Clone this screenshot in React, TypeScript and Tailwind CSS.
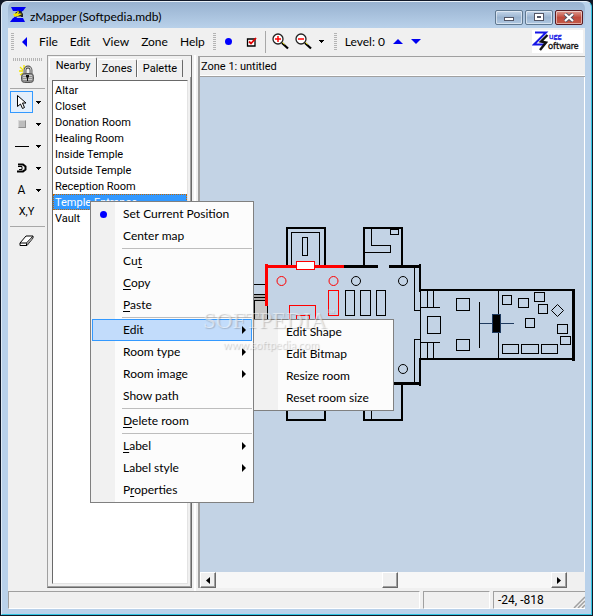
import { ReactNode, useState } from 'react';

interface MenuEntry {
  label: string;
  // index of the underlined access key
  hot?: number;
  submenu?: boolean;
  active?: boolean;
  dot?: boolean;
  divider?: boolean;
}

const rooms = [
  'Altar',
  'Closet',
  'Donation Room',
  'Healing Room',
  'Inside Temple',
  'Outside Temple',
  'Reception Room',
  'Temple Entrance',
  'Vault',
];

const contextMenu: MenuEntry[] = [
  { label: 'Set Current Position', dot: true },
  { label: 'Center map' },
  { label: 'Cut', hot: 2, divider: true },
  { label: 'Copy', hot: 0 },
  { label: 'Paste', hot: 0 },
  { label: 'Edit', submenu: true, active: true, divider: true },
  { label: 'Room type', submenu: true },
  { label: 'Room image', submenu: true },
  { label: 'Show path' },
  { label: 'Delete room', hot: 0, divider: true },
  { label: 'Label', hot: 0, submenu: true, divider: true },
  { label: 'Label style', submenu: true },
  { label: 'Properties', hot: 1 },
];

const editMenu: MenuEntry[] = [
  { label: 'Edit Shape' },
  { label: 'Edit Bitmap' },
  { label: 'Resize room' },
  { label: 'Reset room size' },
];

function Caret() {
  return (
    <svg width="6" height="3" viewBox="0 0 6 3" shapeRendering="crispEdges">
      <path d="M0 0h6L3 3z" />
    </svg>
  );
}

function Grip() {
  return <div className="h-[18px] w-[3px] bg-[repeating-linear-gradient(to_bottom,#b4b4b4_0px,#b4b4b4_1px,#f0f0f0_1px,#f0f0f0_2px)]" />;
}

function AppIcon() {
  return (
    <svg width="16" height="16" viewBox="0 0 16 16">
      <path d="M1 0h15l-3 4H3zM0 15l3-4h10l2 4z" fill="#0000f0" />
      <path d="M12 3L4 12" stroke="#0000f0" strokeWidth="2" />
      <path d="M5 6l3-2h3l2 3v3H6z" fill="#222" />
      <path d="M3 7l4-1 1-3 1 3 3 1-4 2-3 1z" fill="#f4e800" />
      <path d="M8 6h2v1H8zM6 9h5v1H6z" fill="#777" />
    </svg>
  );
}

function Magnifier({ plus }: { plus?: boolean }) {
  return (
    <svg width="17" height="17" viewBox="0 0 17 17">
      <circle cx="6" cy="6" r="5" fill="#fff" stroke="#222" strokeWidth="1.3" />
      <path d="M3 6h6" stroke="#f00" strokeWidth="1.5" />
      {plus && <path d="M6 3v6" stroke="#f00" strokeWidth="1.5" />}
      <path d="M10 10l6 5.5" stroke="#000" strokeWidth="2.2" />
      <path d="M10.5 9.5l2 2" stroke="#e8e000" strokeWidth="1" />
    </svg>
  );
}

function ZuggLogo() {
  return (
    <svg width="51" height="23" viewBox="0 0 51 23" role="img" aria-label="Zugg Software">
      <rect width="51" height="23" fill="#fff" />
      <path d="M3 2.5h11L2 14.500h10" fill="none" stroke="#1616e6" strokeWidth="2" />
      <path d="M15.500 5L9 11.500l5 1L8 20" fill="none" stroke="#111" strokeWidth="2.400" />
      <text x="17" y="9" fontSize="8" fontFamily="Lato, sans-serif" fill="#1616e6" stroke="#1616e6" strokeWidth="0.3">ugg</text>
      <text x="16" y="19" fontSize="9" fontFamily="Lato, sans-serif" fill="#111" stroke="#111" strokeWidth="0.3">oftware</text>
    </svg>
  );
}

function LockIcon() {
  return (
    <svg width="18" height="19" viewBox="0 0 18 19">
      <path d="M1 2l3 3M5 0v4M0 6h4M1 10l3-2" stroke="#f2e600" strokeWidth="1.3" />
      <path d="M6 9V5a3 3 0 0 1 6 0v4" fill="none" stroke="#444" strokeWidth="2.800" />
      <path d="M6 9V5a3 3 0 0 1 6 0v4" fill="none" stroke="#ccc" strokeWidth="1.200" />
      <rect x="2.500" y="8.500" width="12" height="9" rx="3" fill="#8f8f8f" stroke="#555" />
      <path d="M4 10.500h9M4 12.500h9M4 14.500h9" stroke="#ccc" />
      <path d="M7 10h3v2l-1 1v3H8v-3l-1-1z" fill="#111" />
    </svg>
  );
}

function PointerIcon() {
  return (
    <svg width="11" height="16" viewBox="0 0 11 16">
      <path d="M1.500 1.500v11l3-2.500 2 4.500 2-1-2-4.500h3.500z" fill="#fff" stroke="#000" />
    </svg>
  );
}

function MapCanvas() {
  return (
    <svg width="385" height="494" viewBox="200 77 385 494" fill="none" stroke="#000" className="block max-w-none" role="img" aria-label="Zone map">
      <g shapeRendering="crispEdges">
        {/* west stairs */}
        <rect x="250" y="294" width="17" height="7" fill="#a8a8a8" stroke="none" />
        <rect x="250" y="301" width="17" height="19" fill="#c8c8c8" stroke="none" />
        <path d="M250 284.500h16M250 294.500h17M250 297.500h17M255 300.500h12M254.500 300v20M267.500 306v14" />

        {/* north and south side rooms */}
        <path d="M287 266V228h38v38M364 266V228h38v38M287 383v37h38v-37M364 383v37h38v-37" strokeWidth="2" />
        <path d="M291.500 266V232.500h28V266M302.500 237.500h5v18h-5zM371.500 229v16.500h19v7H365M390.500 229.500h8v5h-8zM371.500 383v36" />

        {/* main hall */}
        <path d="M344 266.500h34M389 266.500h32M394 383.500h27" strokeWidth="3" />
        <path d="M420 264v28M420 358v28" strokeWidth="2" />
        <path d="M414.500 268v42.500h6M414.500 382v-42.500h6M420.500 290v70" />
        <path d="M345.500 290.500h9v25h-9zM360.500 290.500h10v25h-10zM376.500 290.500h9v25h-9z" />

        {/* current room */}
        <path d="M265 266.500h79M266.500 264v42" stroke="#f00" strokeWidth="3" />
        <path d="M328.500 290.500h10v25h-10zM289.500 325v-19.500h26V325M296.500 325v-9.500h13v9.500" stroke="#f00" />
        <rect x="296.500" y="261.500" width="18" height="8" fill="#fff" stroke="#f00" />

        {/* east room */}
        <path d="M420 290h154M420 359h154" strokeWidth="2" />
        <path d="M573.500 289v72" strokeWidth="3" />
        <path d="M427.500 291v16M433.500 291v16M421 307.500h19M421 342.500h19M427.500 343v16M433.500 343v16M479.500 302v46M498.500 291v68" />
        <path d="M427.500 316.500h13v17h-13zM456.500 298.500h13v12h-13zM456.500 339.500h13v11h-13z" />
        <path d="M502.500 295.500h9v9h-9zM518.500 298.500h10v9h-10zM534.500 292.500h10v9h-10zM538.500 304.500h9v9h-9zM525.500 318.500h9v9h-9zM557.500 324.500h10v9h-10zM560.500 336.500h10v8h-10z" />
        <path d="M502.500 344.500h16v9h-16zM521.500 344.500h17v9h-17zM541.500 344.500h16v9h-16z" />
        <path d="M480 323.500h34" stroke="#1f3a5f" />
        <rect x="492.500" y="314.500" width="8" height="18" fill="#000" stroke="#1f3a5f" />
      </g>
      <path d="M557.500 304.500l6 6-6 6-6-6z" />
      <circle cx="281.500" cy="281" r="4.500" stroke="#f00" />
      <circle cx="333.500" cy="281" r="4.500" stroke="#f00" />
      <circle cx="356" cy="281" r="4.500" />
      <circle cx="403" cy="281" r="4.500" />
      <circle cx="403" cy="369" r="4.500" />
    </svg>
  );
}

function MenuLabel({ label, hot }: { label: string; hot?: number }) {
  if (hot === undefined) return <span>{label}</span>;
  return (
    <span>
      {label.slice(0, hot)}
      <u className="underline-offset-2">{label[hot]}</u>
      {label.slice(hot + 1)}
    </span>
  );
}

function PopupMenu({ items, className }: { items: MenuEntry[]; className: string }) {
  return (
    <ul
      role="menu"
      className={`absolute z-10 border border-[#808080] bg-[linear-gradient(to_right,#f1f1f1_24px,#fcfcfc_24px)] p-px font-['Lato',sans-serif] text-[12px] text-black ${className}`}
    >
      {items.map((item) => (
        <li key={item.label} role="none">
          {item.divider && <div className="my-px ml-[30px] h-px bg-[#bdbdbd]" />}
          <button
            role="menuitem"
            className={`flex h-[22px] w-full items-center border pr-1 text-left leading-5 ${
              item.active ? 'border-[#3399ff] bg-[#c2dcfb]' : 'border-transparent'
            }`}
          >
            <span className="flex w-[30px] pl-[7px]">
              {item.dot && <span className="h-[7px] w-[7px] rounded-full bg-[#0000ff]" />}
            </span>
            <span className="flex-1 whitespace-nowrap">
              <MenuLabel label={item.label} hot={item.hot} />
            </span>
            {item.submenu && (
              <svg width="5" height="8" viewBox="0 0 5 8">
                <path d="M0 0l4 4-4 4z" />
              </svg>
            )}
          </button>
        </li>
      ))}
    </ul>
  );
}

function ToolRow({ label, children, active, menu = true }: { label: string; children: ReactNode; active?: boolean; menu?: boolean }) {
  return (
    <div className="flex h-[22px] items-center">
      <button
        aria-label={label}
        className={`flex h-[22px] items-center justify-center border ${menu ? 'w-[23px]' : 'w-[33px]'} ${
          active ? 'border-[#3399ff] bg-[#e4effb]' : 'border-transparent'
        }`}
      >
        {children}
      </button>
      {menu && (
        <button aria-label={`${label} options`} className="flex w-2.5 justify-center">
          <Caret />
        </button>
      )}
    </div>
  );
}

function TitleButton({ label, children, close }: { label: string; children: ReactNode; close?: boolean }) {
  return (
    <button
      aria-label={label}
      className={`flex h-[15px] w-7 items-center justify-center rounded-[2px] border shadow-[inset_0_0_0_1px_rgba(255,255,255,0.5)] ${
        close
          ? 'border-[#5a1a20] bg-linear-to-b from-[#dc9a90] via-[#c04a3c] to-[#c45a48]'
          : 'border-[#5f7890] bg-linear-to-b from-[#c4d6ea] via-[#9ab4d0] to-[#b0c8e2]'
      }`}
    >
      {children}
    </button>
  );
}

const scrollButton =
  'flex h-4 w-4 items-center justify-center border border-t-white border-l-white border-r-[#696969] border-b-[#696969] bg-[#f0f0f0] shadow-[inset_-1px_-1px_0_#a0a0a0]';

export default function App() {
  const [tab, setTab] = useState('Nearby');
  const [selected, setSelected] = useState('Temple Entrance');

  return (
    <div className="relative flex h-screen min-h-[520px] flex-col overflow-hidden bg-[#101828] p-px font-['Roboto',sans-serif] text-[11px] text-black">
      <div className="flex min-h-0 flex-1 flex-col rounded-t-md border border-t-[#e8f0f8] border-r-[#2fc3e0] border-b-[#2fc3e0] border-l-[#dfeaf5] bg-[#b9d1ea] px-1.5 pb-[5px]">
        <header className="flex h-[26px] shrink-0 items-center gap-1 rounded-t-md bg-linear-to-b from-[#98b2d0] to-[#b9d1ea] pl-0.5">
          <AppIcon />
          <h1 className="flex-1 pt-1 font-['Lato',sans-serif] text-[12px] leading-5">zMapper (Softpedia.mdb)</h1>
          <div className="flex gap-0.5 pt-1 pr-0.5">
            <TitleButton label="Minimize">
              <span className="mt-1 h-1 w-2.5 border border-[#535666] bg-white" />
            </TitleButton>
            <TitleButton label="Maximize">
              <span className="h-2 w-2.5 border border-[#535666] bg-white p-0.5">
                <span className="block h-0.5 border border-[#535666]" />
              </span>
            </TitleButton>
            <TitleButton label="Close" close>
              <svg width="12" height="9" viewBox="0 0 12 9">
                <path d="M2 1l8 7M10 1L2 8" stroke="#535666" strokeWidth="4" />
                <path d="M2 1l8 7M10 1L2 8" stroke="#fff" strokeWidth="2.2" />
              </svg>
            </TitleButton>
          </div>
        </header>

        <div className="flex min-h-0 flex-1 flex-col bg-[#f0f0f0]">
          <div className="flex h-[27px] shrink-0 items-center justify-between pr-0.5">
            <div className="flex items-center pl-[3px] font-['Lato',sans-serif] text-[12px]">
              <Grip />
              <button aria-label="Back" className="mr-3 ml-2">
                <svg width="5" height="10" viewBox="0 0 5 10">
                  <path d="M5 0v10L0 5z" fill="#0000f0" />
                </svg>
              </button>
              <nav className="flex gap-3">
                <button>File</button>
                <button>Edit</button>
                <button>View</button>
                <button>Zone</button>
                <button>Help</button>
              </nav>
              <div className="flex items-center pl-2">
                <Grip />
                <button aria-label="Current position" className="ml-[9px] h-[7px] w-[7px] rounded-full bg-[#0000ff]" />
                <button aria-label="Toggle check" className="ml-3.5">
                  <svg width="11" height="10" viewBox="0 0 11 10">
                    <path d="M1.500 2h7.500v7H1.500z" fill="#fff" stroke="#000" strokeWidth="1.300" />
                    <path d="M3 4.500l2 2L10 1" fill="none" stroke="#e00000" strokeWidth="1.800" />
                  </svg>
                </button>
                <div className="mr-1.5 ml-2 h-[22px] w-px bg-[#a8a8a8]" />
                <button aria-label="Zoom in" className="mr-1.5">
                  <Magnifier plus />
                </button>
                <button aria-label="Zoom out" className="mr-1.5">
                  <Magnifier />
                </button>
                <button aria-label="Zoom options" className="mr-2.5">
                  <Caret />
                </button>
                <Grip />
                <span className="mr-2 ml-2">Level: 0</span>
                <button aria-label="Level up" className="mr-2">
                  <svg width="10" height="5" viewBox="0 0 10 5">
                    <path d="M0 5h10L5 0z" fill="#0000f0" />
                  </svg>
                </button>
                <button aria-label="Level down">
                  <svg width="10" height="5" viewBox="0 0 10 5">
                    <path d="M0 0h10L5 5z" fill="#0000f0" />
                  </svg>
                </button>
              </div>
            </div>
            <ZuggLogo />
          </div>

          <div className="flex min-h-0 flex-1">
            <aside className="flex w-[39px] shrink-0 flex-col pt-[3px] pl-0.5">
              <div className="ml-[3px] h-[3px] w-[29px] bg-[repeating-linear-gradient(to_right,#b4b4b4_0px,#b4b4b4_1px,#f0f0f0_1px,#f0f0f0_2px)]" />
              <button aria-label="Lock map" className="flex h-[27px] w-[35px] items-center justify-center">
                <LockIcon />
              </button>
              <div className="mb-0.5 h-px w-[35px] bg-[#a8a8a8]" />
              <ToolRow label="Select" active>
                <PointerIcon />
              </ToolRow>
              <ToolRow label="Room">
                <span className="h-2 w-2 border border-t-[#d8d8d8] border-r-[#909090] border-b-[#909090] border-l-[#d8d8d8] bg-[#bdbdbd]" />
              </ToolRow>
              <ToolRow label="Line">
                <span className="h-px w-3.5 bg-black" />
              </ToolRow>
              <ToolRow label="Door">
                <svg width="10" height="10" viewBox="0 0 10 10" fill="none" stroke="#000">
                  <path d="M1 1.500h5l2.500 2v3l-2.500 2H0" strokeWidth="2" />
                  <path d="M1 3.500h4v3H2" strokeWidth="1" />
                </svg>
              </ToolRow>
              <ToolRow label="Text">
                <span className="text-[12px]">A</span>
              </ToolRow>
              <ToolRow label="Coordinates" menu={false}>
                X,Y
              </ToolRow>
              <div className="my-[3px] h-px w-[35px] bg-[#a8a8a8]" />
              <ToolRow label="Eraser" menu={false}>
                <svg width="15" height="12" viewBox="0 0 15 12">
                  <path d="M1 8l6-7h7v2l-6 7.500H1z" fill="#fff" stroke="#000" />
                  <path d="M1 8h6.500l6-6.500M7.500 8v2.500" fill="none" stroke="#000" />
                  <path d="M8 9l5-6" stroke="#999" strokeWidth="1.5" />
                </svg>
              </ToolRow>
            </aside>

            <section className="mr-0.5 mb-[3px] flex w-[145px] shrink-0 flex-col border border-t-[#a0a0a0] border-r-[#696969] border-b-[#696969] border-l-[#a0a0a0]">
              <div role="tablist" className="flex h-[21px] items-end pl-px">
                {['Nearby', 'Zones', 'Palette'].map((name) => (
                  <button
                    key={name}
                    role="tab"
                    aria-selected={tab === name}
                    onClick={() => setTab(name)}
                    className={`rounded-t-[2px] border border-b-0 border-t-white border-r-[#696969] border-l-white text-center ${
                      tab === name ? 'h-[20px] w-[48px] pb-1' : 'h-[18px] w-[40px] border-b border-b-white last:w-[46px]'
                    } leading-4`}
                  >
                    {name}
                  </button>
                ))}
              </div>
              <div className="flex min-h-0 flex-1 border-r border-b border-r-[#a0a0a0] border-b-[#a0a0a0] pt-[3px] pr-0.5 pb-0.5 pl-1">
                <ul role="listbox" aria-label="Rooms" className="min-w-0 flex-1 border border-t-[#696969] border-r-[#e3e3e3] border-b-[#e3e3e3] border-l-[#696969] bg-white pt-px">
                  {rooms.map((room) => (
                    <li key={room} role="option" aria-selected={selected === room}>
                      <button
                        onClick={() => setSelected(room)}
                        className={`block h-4 w-full truncate border border-dotted pl-px text-left leading-4 ${
                          selected === room ? 'border-[#c66800] bg-[#3399ff] text-white' : 'border-transparent'
                        }`}
                      >
                        {room}
                      </button>
                    </li>
                  ))}
                </ul>
              </div>
            </section>

            <div className="w-1 shrink-0 border-l-2 border-white" />

            <main className="mt-px mb-[3px] flex min-w-0 flex-1 flex-col border-t border-l-2 border-[#a0a0a0]">
              <h2 className="h-5 shrink-0 border-b border-[#a0a0a0] pl-px leading-[20px] shadow-[inset_0_-1px_0_#fff]">Zone 1: untitled</h2>
              <div className="min-h-0 flex-1 overflow-hidden border-r border-white bg-[#c3d3e5]">
                <MapCanvas />
              </div>
              <div className="flex h-4 shrink-0">
                <button aria-label="Scroll left" className={scrollButton}>
                  <svg width="4" height="7" viewBox="0 0 4 7">
                    <path d="M4 0v7L0 3.500z" />
                  </svg>
                </button>
                <div className="flex flex-1 justify-center bg-[#f7f7f7]">
                  <div className={`${scrollButton} ml-3`} />
                </div>
                <button aria-label="Scroll right" className={scrollButton}>
                  <svg width="4" height="7" viewBox="0 0 4 7">
                    <path d="M0 0v7l4-3.500z" />
                  </svg>
                </button>
                <div className="w-[18px]" />
              </div>
            </main>
          </div>

          <footer className="flex h-[18px] shrink-0 gap-[3px] text-[12px] leading-4">
            <div className="flex-1 border border-t-[#a0a0a0] border-r-white border-b-white border-l-[#a0a0a0]" />
            <div className="w-[67px] border border-t-[#a0a0a0] border-r-white border-b-white border-l-[#a0a0a0]" />
            <div className="flex w-[92px] items-end justify-between border border-t-[#a0a0a0] border-r-0 border-b-white border-l-[#a0a0a0] pl-1">
              <span>-24, -818</span>
              <svg width="12" height="12" viewBox="0 0 12 12" stroke="#a0a0a0" strokeWidth="1.5">
                <path d="M1 12L12 1M5 12l7-7M9 12l3-3" />
              </svg>
            </div>
          </footer>
        </div>
      </div>

      <PopupMenu items={contextMenu} className="top-[201px] left-[90px] w-[164px]" />
      <PopupMenu items={editMenu} className="top-[319px] left-[253px] w-[141px]" />

      <div className="pointer-events-none absolute top-[307px] left-[203px] z-20 w-[140px] text-white/50 [text-shadow:1px_1px_1px_rgba(90,90,90,0.3)]">
        <p className="flex font-['Liberation_Serif',serif] text-[23px] leading-[28px]">
          SOFTPEDIA<span className="text-[8px] leading-3">™</span>
        </p>
        <p className="pl-5 font-['Lato',sans-serif] text-[11px] leading-5">www.softpedia.com</p>
      </div>
    </div>
  );
}
